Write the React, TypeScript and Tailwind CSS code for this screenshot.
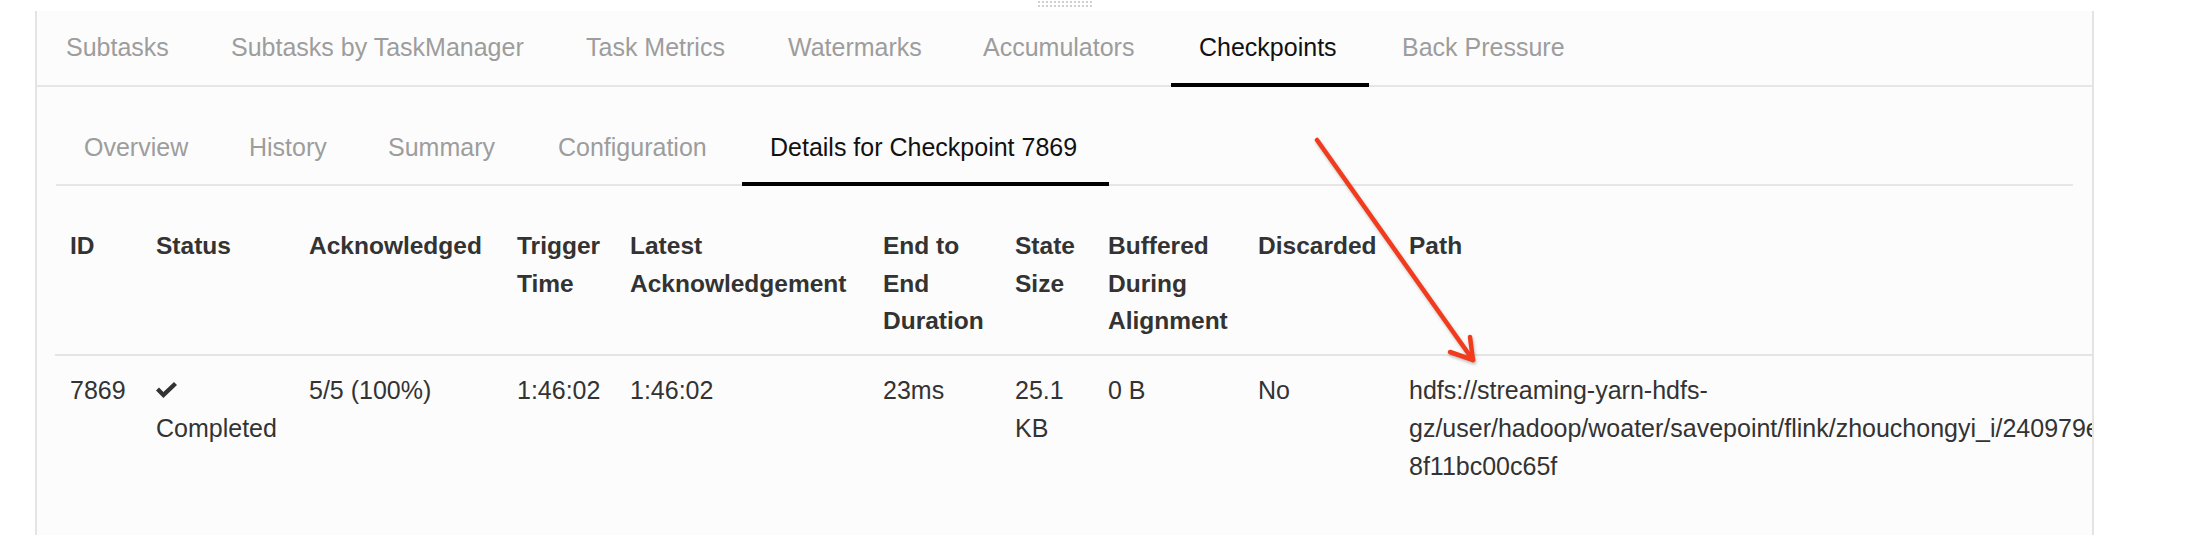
import React from "react";

const mainTabs = [
    { label: "Subtasks", w: "w-[165px]" },
    { label: "Subtasks by TaskManager", w: "w-[355px]" },
    { label: "Task Metrics", w: "w-[202px]" },
    { label: "Watermarks", w: "w-[195px]" },
    { label: "Accumulators", w: "w-[216px]" },
    { label: "Checkpoints", w: "w-[203px]", active: true },
    { label: "Back Pressure", w: "w-[240px]" },
];

const subTabs = [
    { label: "Overview", w: "w-[165px]" },
    { label: "History", w: "w-[139px]" },
    { label: "Summary", w: "w-[170px]" },
    { label: "Configuration", w: "w-[212px]" },
    { label: "Details for Checkpoint 7869", w: "w-[367px]", active: true },
];

const columns = [
    { label: "ID", w: "w-[86px]" },
    { label: "Status", w: "w-[153px]" },
    { label: "Acknowledged", w: "w-[208px]" },
    { label: "Trigger Time", w: "w-[113px]" },
    { label: "Latest Acknowledgement", w: "w-[253px]" },
    { label: "End to End Duration", w: "w-[132px]" },
    { label: "State Size", w: "w-[93px]" },
    { label: "Buffered During Alignment", w: "w-[150px]" },
    { label: "Discarded", w: "w-[151px]" },
    { label: "Path", w: "w-[1000px]" },
];

function CheckIcon() {
    return (
        <svg width="21" height="16" viewBox="0 0 21 16" className="block mt-[11px] mb-[11px]">
            <path d="M0 8.6 L3 5.6 L7.4 10 L18 0 L21 3 L7.4 16 Z" fill="#333333" />
        </svg>
    );
}

function Handle() {
    const dots = Array.from({ length: 14 });
    return (
        <div className="flex flex-col gap-[2px]">
            {[0, 1].map((r) => (
                <div key={r} className="flex gap-[2px]">
                    {dots.map((_, i) => (
                        <span key={i} className="block w-[2px] h-[2px] bg-[#d0d0d0]" />
                    ))}
                </div>
            ))}
        </div>
    );
}

export default function App() {
    return (
        <div className="relative w-[2194px] h-[544px] bg-white overflow-hidden font-['Liberation_Sans',Arial,sans-serif]">
            {/* resize handle */}
            <div className="h-[11px] pl-[1038px] pt-[1px]">
                <Handle />
            </div>

            <div className="ml-[35px] w-[2059px] h-[524px] border-x-2 border-[#e4e4e4] bg-[#fcfcfc] overflow-hidden">
                {/* main tabs */}
                <div className="flex h-[76px] border-b-2 border-[#e6e6e6]">
                    {mainTabs.map((t) => (
                        <div
                            key={t.label}
                            className={`relative shrink-0 ${t.w} pl-[29px] pt-[18px] text-[25px] leading-[36px] whitespace-nowrap ${t.active ? "text-[#111]" : "text-[#9d9d9d]"}`}
                        >
                            {t.label}
                            {t.active && (
                                <span className="absolute left-[1px] right-[4px] bottom-[-2px] h-[4px] bg-black" />
                            )}
                        </div>
                    ))}
                </div>

                {/* sub tabs */}
                <div className="mx-[19px] mt-[22px] flex h-[77px] border-b-2 border-[#e6e6e6]">
                    {subTabs.map((t) => (
                        <div
                            key={t.label}
                            className={`relative shrink-0 ${t.w} pl-[28px] pt-[20px] text-[25px] leading-[36px] whitespace-nowrap ${t.active ? "text-[#111]" : "text-[#9d9d9d]"}`}
                        >
                            {t.label}
                            {t.active && (
                                <span className="absolute left-0 right-0 bottom-[-2px] h-[4px] bg-black" />
                            )}
                        </div>
                    ))}
                </div>

                {/* details table */}
                <table className="ml-[18px] mt-[26px] table-fixed border-collapse w-[2339px] text-[#333]">
                    <thead>
                        <tr className="border-b-2 border-[#e4e4e4]">
                            {columns.map((c) => (
                                <th
                                    key={c.label}
                                    className={`${c.w} px-[15px] pt-[15px] pb-[14px] text-left align-top font-bold text-[24.5px] leading-[37.5px]`}
                                >
                                    {c.label}
                                </th>
                            ))}
                        </tr>
                    </thead>
                    <tbody className="text-[25px] leading-[38px]">
                        <tr>
                            <td className="px-[15px] pt-[15px] align-top">7869</td>
                            <td className="px-[15px] pt-[15px] align-top">
                                <CheckIcon />
                                <div>Completed</div>
                            </td>
                            <td className="px-[15px] pt-[15px] align-top">5/5 (100%)</td>
                            <td className="px-[15px] pt-[15px] align-top">1:46:02</td>
                            <td className="px-[15px] pt-[15px] align-top">1:46:02</td>
                            <td className="px-[15px] pt-[15px] align-top">23ms</td>
                            <td className="px-[15px] pt-[15px] align-top">25.1 KB</td>
                            <td className="px-[15px] pt-[15px] align-top">0 B</td>
                            <td className="px-[15px] pt-[15px] align-top">No</td>
                            <td className="px-[15px] pt-[15px] align-top whitespace-nowrap">
                                <div>hdfs://streaming-yarn-hdfs-</div>
                                <div>gz/user/hadoop/woater/savepoint/flink/zhouchongyi_i/240979e3a1d94b7c-</div>
                                <div>8f11bc00c65f</div>
                            </td>
                        </tr>
                    </tbody>
                </table>
            </div>

            {/* annotation arrow */}
            <svg className="absolute left-0 top-0 pointer-events-none" width="2194" height="544">
                <g stroke="#f23a1c" strokeWidth="4.5" strokeLinecap="round" fill="none" style={{ filter: "drop-shadow(1px 2px 1.5px rgba(0,0,0,0.25))" }}>
                    <line x1="1317" y1="140" x2="1473" y2="360" />
                    <polyline points="1450,352 1473,360 1470,337" strokeLinejoin="round" />
                </g>
            </svg>
        </div>
    );
}
